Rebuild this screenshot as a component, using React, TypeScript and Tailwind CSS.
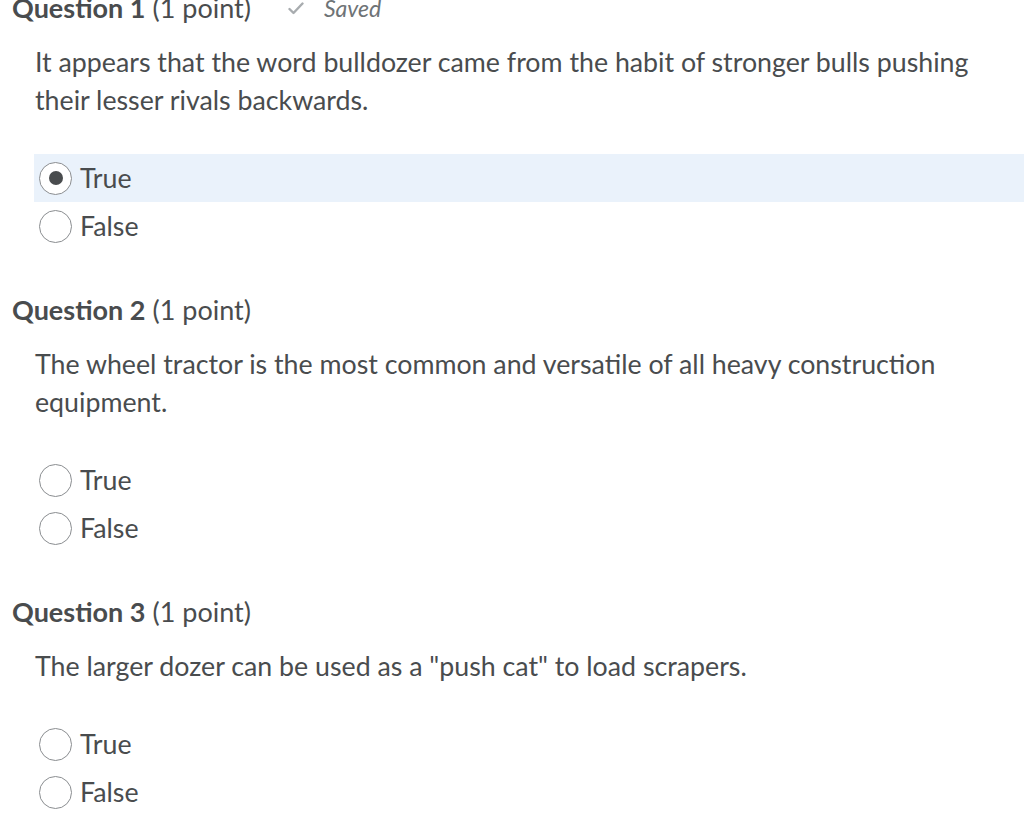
import React from "react";

type Question = {
  num: number;
  text: string;
  selected?: "True" | "False";
  saved?: boolean;
};

const questions: Question[] = [
  {
    num: 1,
    text: "It appears that the word bulldozer came from the habit of stronger bulls pushing their lesser rivals backwards.",
    selected: "True",
    saved: true,
  },
  {
    num: 2,
    text: "The wheel tractor is the most common and versatile of all heavy construction equipment.",
  },
  {
    num: 3,
    text: 'The larger dozer can be used as a "push cat" to load scrapers.',
  },
];

function Radio({ label, checked }: { label: string; checked: boolean }) {
  return (
    <div
      className={`flex h-[48px] items-center pl-[5px] ${checked ? "bg-[#eaf2fb]" : ""}`}
    >
      <span className="flex h-[33px] w-[33px] items-center justify-center rounded-full border-[1.5px] border-[#8a8d90] bg-white">
        {checked && <span className="h-[14px] w-[14px] rounded-full bg-[#494c4e]" />}
      </span>
      <span className="ml-[8px] text-[26.75px]">{label}</span>
    </div>
  );
}

function QuestionBlock({ q }: { q: Question }) {
  return (
    <div className="mb-[45px]">
      <div className="flex items-center pl-[12px] text-[27px] leading-[30px]">
        <span className="font-bold">Question {q.num}</span>
        <span className="ml-[7px]">(1 point)</span>
        {q.saved && (
          <span className="ml-[37px] flex items-center text-[23px] italic text-[#6e7376]">
            <svg width="16" height="13" viewBox="0 0 16 13" className="mr-[20px]">
              <path
                d="M1.5 7 L5.5 11 L14.5 1.5"
                fill="none"
                stroke="#a8acaf"
                strokeWidth="2.4"
                strokeLinecap="round"
                strokeLinejoin="round"
              />
            </svg>
            Saved
          </span>
        )}
      </div>
      <p className="mt-[20px] pl-[35px] pr-[40px] text-[26.75px] leading-[38px]">{q.text}</p>
      <div className="mt-[35px] pl-[34px]">
        <Radio label="True" checked={q.selected === "True"} />
        <Radio label="False" checked={q.selected === "False"} />
      </div>
    </div>
  );
}

export default function App() {
  return (
    <div
      className="h-[827px] w-full overflow-hidden bg-white text-[#494c4e]"
      style={{ fontFamily: "Lato, 'Noto Sans', sans-serif" }}
    >
      <div className="mt-[-7px]">
        {questions.map((q) => (
          <QuestionBlock key={q.num} q={q} />
        ))}
      </div>
    </div>
  );
}
